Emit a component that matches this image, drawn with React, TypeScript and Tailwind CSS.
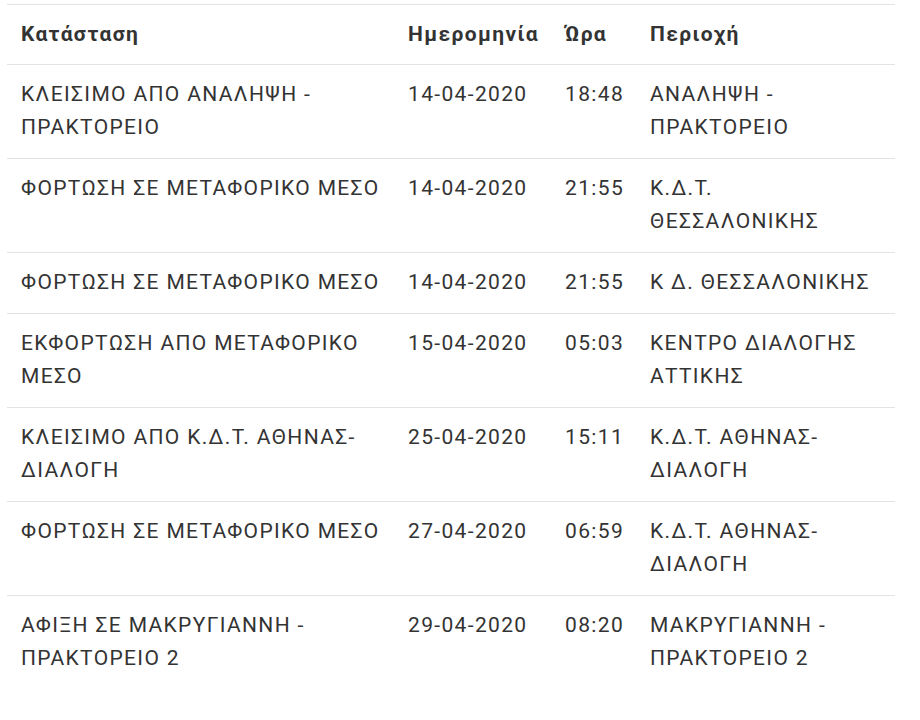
import React from "react";

type Row = { s: string[]; d: string; t: string; p: string[] };

const rows: Row[] = [
  { s: ["ΚΛΕΙΣΙΜΟ ΑΠΟ ΑΝΑΛΗΨΗ -", "ΠΡΑΚΤΟΡΕΙΟ"], d: "14-04-2020", t: "18:48", p: ["ΑΝΑΛΗΨΗ -", "ΠΡΑΚΤΟΡΕΙΟ"] },
  { s: ["ΦΟΡΤΩΣΗ ΣΕ ΜΕΤΑΦΟΡΙΚΟ ΜΕΣΟ"], d: "14-04-2020", t: "21:55", p: ["Κ.Δ.Τ.", "ΘΕΣΣΑΛΟΝΙΚΗΣ"] },
  { s: ["ΦΟΡΤΩΣΗ ΣΕ ΜΕΤΑΦΟΡΙΚΟ ΜΕΣΟ"], d: "14-04-2020", t: "21:55", p: ["Κ Δ. ΘΕΣΣΑΛΟΝΙΚΗΣ"] },
  { s: ["ΕΚΦΟΡΤΩΣΗ ΑΠΟ ΜΕΤΑΦΟΡΙΚΟ", "ΜΕΣΟ"], d: "15-04-2020", t: "05:03", p: ["ΚΕΝΤΡΟ ΔΙΑΛΟΓΗΣ", "ΑΤΤΙΚΗΣ"] },
  { s: ["ΚΛΕΙΣΙΜΟ ΑΠΟ Κ.Δ.Τ. ΑΘΗΝΑΣ-", "ΔΙΑΛΟΓΗ"], d: "25-04-2020", t: "15:11", p: ["Κ.Δ.Τ. ΑΘΗΝΑΣ-", "ΔΙΑΛΟΓΗ"] },
  { s: ["ΦΟΡΤΩΣΗ ΣΕ ΜΕΤΑΦΟΡΙΚΟ ΜΕΣΟ"], d: "27-04-2020", t: "06:59", p: ["Κ.Δ.Τ. ΑΘΗΝΑΣ-", "ΔΙΑΛΟΓΗ"] },
  { s: ["ΑΦΙΞΗ ΣΕ ΜΑΚΡΥΓΙΑΝΝΗ -", "ΠΡΑΚΤΟΡΕΙΟ 2"], d: "29-04-2020", t: "08:20", p: ["ΜΑΚΡΥΓΙΑΝΝΗ -", "ΠΡΑΚΤΟΡΕΙΟ 2"] },
];

const Lines = ({ lines }: { lines: string[] }) => (
  <>
    {lines.map((l, i) => (
      <span key={i} className="block whitespace-nowrap">
        {l}
      </span>
    ))}
  </>
);

const grid = "grid grid-cols-[387px_157px_85px_259px]";
const cell = "px-[14px] pt-[13px] pb-[14px]";
const hcell = "px-[14px] pt-[13px] pb-[13px]";

export default function App() {
  return (
    <div
      className="w-[920px] h-[720px] bg-white pt-[4px] pl-[7px] text-[21px] leading-[33px] tracking-[1.35px] text-[#333333]"
      style={{ fontFamily: "Roboto, 'Noto Sans', sans-serif" }}
    >
      <div className="w-[888px] border-t border-[#e3e3e3]">
        <div className={`${grid} border-b border-[#e3e3e3] font-bold`}>
          <div className={hcell}>Κατάσταση</div>
          <div className={hcell}>Ημερομηνία</div>
          <div className={hcell}>Ώρα</div>
          <div className={hcell}>Περιοχή</div>
        </div>
        {rows.map((r, i) => (
          <div
            key={i}
            className={`${grid} ${i < rows.length - 1 ? "border-b border-[#e3e3e3]" : ""}`}
          >
            <div className={cell}>
              <Lines lines={r.s} />
            </div>
            <div className={`${cell} whitespace-nowrap`}>{r.d}</div>
            <div className={`${cell} whitespace-nowrap`}>{r.t}</div>
            <div className={cell}>
              <Lines lines={r.p} />
            </div>
          </div>
        ))}
      </div>
    </div>
  );
}
